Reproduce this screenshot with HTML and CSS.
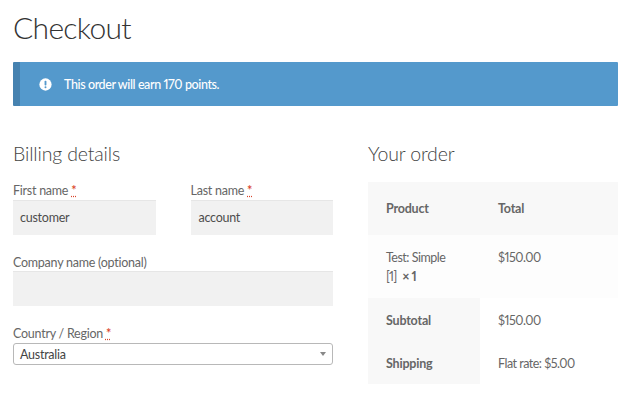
FILE: index.html
```html
<!DOCTYPE html>
<html lang="en">
<head>
<meta charset="utf-8">
<title>Checkout</title>
<link rel="stylesheet" href="styles.css">
</head>
<body>
<main class="page">
  <h1 class="title">Checkout</h1>
  <div class="notice">
    <svg class="notice-icon" viewBox="0 0 14 14" aria-hidden="true">
      <circle cx="7" cy="7" r="6.6" fill="#fff"/>
      <rect x="6" y="3" width="2" height="5" rx="0.8" fill="#5499cc"/>
      <circle cx="7" cy="10" r="1.1" fill="#5499cc"/>
    </svg>
    <span>This order will earn 170 points.</span>
  </div>
  <div class="columns">
    <section class="billing">
      <h2 class="heading">Billing details</h2>
      <div class="name-row">
        <div class="field">
          <label class="label">First name <abbr class="req">*</abbr></label>
          <div class="input">customer</div>
        </div>
        <div class="field">
          <label class="label">Last name <abbr class="req">*</abbr></label>
          <div class="input">account</div>
        </div>
      </div>
      <div class="field company">
        <label class="label">Company name (optional)</label>
        <div class="input"></div>
      </div>
      <div class="field country">
        <label class="label">Country / Region <abbr class="req">*</abbr></label>
        <div class="select"><span>Australia</span><i class="caret"></i></div>
      </div>
    </section>
    <section class="order">
      <h2 class="heading">Your order</h2>
      <table class="order-table">
        <thead>
          <tr class="row-head"><th>Product</th><th>Total</th></tr>
        </thead>
        <tbody>
          <tr class="row-item"><td>Test: Simple<br>[1] &nbsp;<b>× 1</b></td><td>$150.00</td></tr>
        </tbody>
        <tfoot>
          <tr class="row-sub"><th>Subtotal</th><td>$150.00</td></tr>
          <tr class="row-ship"><th>Shipping</th><td>Flat rate: $5.00</td></tr>
        </tfoot>
      </table>
    </section>
  </div>
</main>
</body>
</html>
```

FILE: styles.css
```css
* { box-sizing: border-box; }
html, body { margin: 0; padding: 0; background: #fff; overflow: hidden; }
body { font-family: Lato, "Noto Sans", sans-serif; color: #666; font-size: 12.5px; font-variant-numeric: proportional-nums; }
.page { width: 630px; height: 400px; padding: 0 12px 0 13px; }
.title { margin: 0; height: 62px; padding-top: 5px; font-size: 30px; line-height: 44px; font-weight: 300; color: #333; letter-spacing: -0.7px; }
.notice { height: 44px; background: #5499cc; border-left: 7px solid #4682b0; border-radius: 1px; display: flex; align-items: center; gap: 12px; padding-left: 19px; color: #fff; font-size: 12.5px; font-weight: 500; letter-spacing: -0.4px; }
.notice-icon { width: 13px; height: 13px; flex: none; }
.columns { display: flex; gap: 35px; padding-top: 36px; }
.billing { width: 320px; flex: none; }
.order { flex: 1; }
.heading { margin: 0; font-size: 19.5px; line-height: 24px; font-weight: 300; color: #444; letter-spacing: -0.15px; }
.name-row { display: flex; gap: 35px; margin-top: 16px; }
.name-row .field { flex: 1; min-width: 0; }
.label { display: block; height: 18px; line-height: 17px; font-size: 12.5px; color: #666; white-space: nowrap; letter-spacing: -0.25px; }
.company .label, .country .label { height: 17px; }
.req { color: #d9442a; font-weight: 600; text-decoration: underline dotted; }
.input { height: 35px; background: #f1f1f1; border-top: 1px solid #e6e6e6; line-height: 34px; padding-left: 7px; font-size: 12.5px; color: #4d4d4d; letter-spacing: -0.25px; }
.name-row .field + .field .input { padding-left: 8px; }
.company { margin-top: 19px; }
.country { margin-top: 19px; }
.select { height: 22px; margin-top: 1px; border: 1px solid #b8b8b8; border-radius: 3px; display: flex; align-items: center; justify-content: space-between; padding: 0 6px; color: #444; font-size: 12.5px; letter-spacing: -0.25px; }
.caret { width: 0; height: 0; border-left: 3px solid transparent; border-right: 3px solid transparent; border-top: 4px solid #888; }
.order-table { margin-top: 16px; width: 250px; border-collapse: collapse; table-layout: fixed; font-size: 12.5px; letter-spacing: -0.5px; }
.order-table th, .order-table td { text-align: left; padding: 0 0 0 18px; font-weight: 400; }
.order-table th { font-weight: 700; color: #666; letter-spacing: -0.2px; }
.order-table th:first-child, .order-table td:first-child { width: 112px; }
.row-head { height: 53px; background: #f8f8f8; }
.row-item { height: 63px; background: #fdfdfd; }
.row-item td { vertical-align: top; padding-top: 13px; line-height: 19px; }
.row-item b { font-weight: 700; }
.row-sub { height: 44px; }
.row-ship { height: 42px; }
tfoot th { background: #f8f8f8; }
```
